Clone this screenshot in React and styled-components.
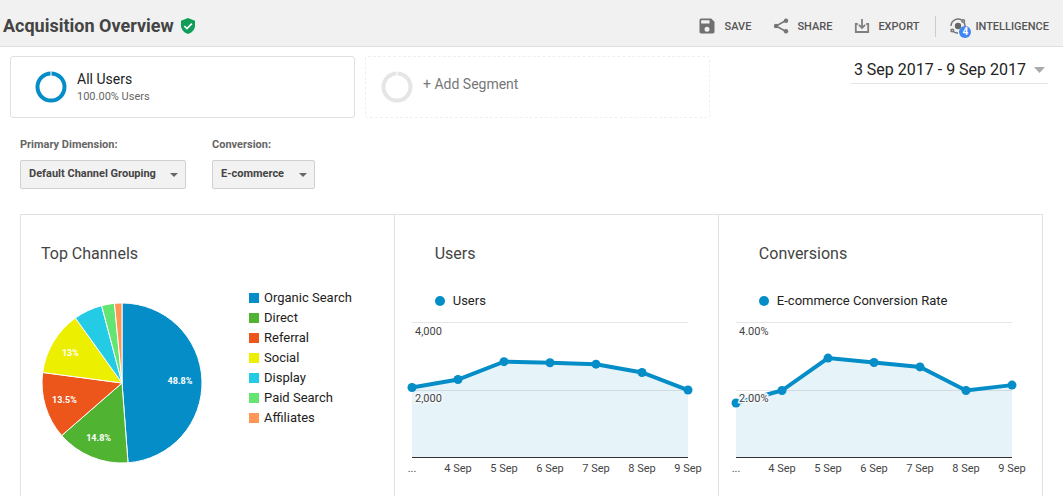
import React from 'react';
import styled, { createGlobalStyle, css } from 'styled-components';

const GlobalStyle = createGlobalStyle`
    * {
        box-sizing: border-box;
    }

    body {
        margin: 0;
        background-color: #fff;
        font-family: Roboto, "Liberation Sans", sans-serif;
        color: #222;
    }

    button, select {
        font-family: inherit;
    }
`;

const StyledPage = styled.div`
    display: flex;
    flex-direction: column;
    min-height: 100vh;
`;

const StyledHeader = styled.header`
    display: flex;
    align-items: center;
    justify-content: space-between;
    height: 47px;
    padding: 6px 14px 0 3px;
    background-color: #f1f1f1;
    border-bottom: 1px solid #dedede;
`;

const StyledTitle = styled.h1`
    display: flex;
    align-items: center;
    gap: 6px;
    margin: 0;
    font-size: 18px;
    line-height: 24px;
    font-weight: 700;
    color: #444;
`;

const StyledToolbar = styled.nav`
    display: flex;
    align-items: center;
    gap: 22px;
`;

const StyledToolbarButton = styled.button`
    display: flex;
    align-items: center;
    gap: 8px;
    padding: 0;
    border: 0;
    background: none;
    color: #555;
    font-size: 11px;
    line-height: 21px;
    font-weight: 500;
    cursor: pointer;

    ${props => props.$separated && css`
        margin-left: -6px;
        padding-left: 13px;
        border-left: 1px solid #ccc;
    `}
`;

const StyledIconWrapper = styled.span`
    position: relative;
    display: flex;
`;

const StyledBadge = styled.span`
    position: absolute;
    left: 10px;
    top: 9px;
    width: 12px;
    height: 12px;
    border-radius: 50%;
    background-color: #4285f4;
    color: #fff;
    font-size: 10px;
    line-height: 12px;
    font-weight: 700;
    text-align: center;
`;

const StyledSegments = styled.section`
    display: grid;
    grid-template-columns: 1fr 1fr 328px;
    gap: 10px;
    padding: 9px 15px 0 10px;
`;

const StyledSegment = styled.button`
    display: flex;
    align-items: center;
    gap: 10px;
    height: 62px;
    padding: 0 24px;
    border: 1px solid #e0e0e0;
    border-radius: 3px;
    background: none;
    text-align: left;
    cursor: pointer;

    ${props => props.$empty && css`
        padding: 0 15px;
        border: 1px dashed #efefef;
    `}
`;

const StyledSegmentName = styled.span`
    display: block;
    font-size: 14px;
    line-height: 18px;
    color: #222;

    ${props => props.$muted && css`
        padding-bottom: 6px;
        color: #777;
    `}
`;

const StyledSegmentShare = styled.span`
    display: block;
    font-size: 11px;
    line-height: 17px;
    color: #666;
`;

const StyledDateRange = styled.button`
    display: flex;
    align-items: center;
    gap: 8px;
    justify-self: end;
    align-self: start;
    height: 28px;
    padding: 0 3px;
    border: 0;
    border-bottom: 1px solid #e4e4e4;
    background: none;
    font-size: 16px;
    color: #222;
    cursor: pointer;
`;

const StyledFilters = styled.section`
    display: flex;
    gap: 26px;
    padding: 19px 20px 25px;
`;

const StyledFilter = styled.div`
    display: flex;
    flex-direction: column;
    align-items: flex-start;
    gap: 7px;
`;

const StyledFilterLabel = styled.label`
    font-size: 11px;
    line-height: 16px;
    font-weight: 700;
    color: #666;
`;

const StyledSelectWrapper = styled.div`
    position: relative;

    svg {
        position: absolute;
        right: 8px;
        top: 13px;
        pointer-events: none;
    }
`;

const StyledSelect = styled.select`
    appearance: none;
    height: 29px;
    padding: 0 29px 3px 8px;
    border: 1px solid #d0d0d0;
    border-radius: 2px;
    background-color: #f2f2f2;
    font-size: 11px;
    font-weight: 700;
    color: #444;
`;

const StyledPanels = styled.main`
    display: grid;
    grid-template-columns: 23fr 20fr 20fr;
    flex: 1;
    margin: 0 20px;
    border: 1px solid #e2e2e2;
    border-bottom: 0;
`;

const StyledPanel = styled.section`
    min-width: 0;

    & + & {
        border-left: 1px solid #e2e2e2;
    }
`;

const StyledPanelTitle = styled.h2`
    margin: 0;
    padding: 29px 20px 0;
    font-size: 16px;
    line-height: 20px;
    font-weight: 400;
    color: #444;

    ${props => props.$inset && css`
        padding-left: 40px;
    `}
`;

const StyledPieRow = styled.div`
    display: flex;
    align-items: flex-start;
    gap: 46px;
    padding: 24px 20px 0;

    svg {
        flex: none;
        margin-top: 14px;
    }
`;

const StyledLegend = styled.ul`
    margin: 0;
    padding: 0;
    list-style: none;
`;

const StyledLegendItem = styled.li`
    display: flex;
    align-items: center;
    gap: 5px;
    font-size: 13px;
    line-height: 20px;
    white-space: nowrap;

    &::before {
        content: '';
        width: 10px;
        height: 10px;
        background-color: ${props => props.$color};
    }
`;

const StyledSeriesName = styled.div`
    display: flex;
    align-items: center;
    gap: 8px;
    padding: 27px 20px 0 40px;
    font-size: 13px;
    line-height: 20px;

    &::before {
        content: '';
        width: 10px;
        height: 10px;
        border-radius: 50%;
        background-color: #058dc7;
    }
`;

const StyledLineChart = styled.svg`
    display: block;
    overflow: visible;
    font-size: 11px;
    fill: #444;
`;

const StyledAxisLabel = styled.text`
    paint-order: stroke;
    stroke: ${props => props.$halo};
    stroke-width: 3px;
`;

const CHANNELS = [
    { name: 'Organic Search', share: 48.8, color: '#058dc7' },
    { name: 'Direct', share: 14.8, color: '#50b432' },
    { name: 'Referral', share: 13.5, color: '#ed561b' },
    { name: 'Social', share: 13, color: '#edef00' },
    { name: 'Display', share: 5.8, color: '#24cbe5' },
    { name: 'Paid Search', share: 2.6, color: '#64e572' },
    { name: 'Affiliates', share: 1.5, color: '#ff9655' },
];

const DAYS = ['...', '4 Sep', '5 Sep', '6 Sep', '7 Sep', '8 Sep', '9 Sep'];
const USERS = [2059, 2296, 2824, 2791, 2750, 2504, 1985];
const CONVERSION_RATES = [1.6, 1.97, 2.93, 2.8, 2.67, 1.97, 2.13];

function SaveIcon() {
    return (
        <svg width="20" height="20" viewBox="0 0 24 24" fill="#707070">
            <path d="M17 3H5a2 2 0 0 0-2 2v14c0 1.100.9 2 2 2h14c1.100 0 2-.9 2-2V7l-4-4zm-5 16a3 3 0 1 1 0-6 3 3 0 0 1 0 6zm3-10H5V5h10v4z" />
        </svg>
    );
}

function ShareIcon() {
    return (
        <svg width="16" height="16" viewBox="0 0 16 16" fill="#757575">
            <path d="M13 2.500L3 8l10 5.500" fill="none" stroke="#757575" strokeWidth="1.500" />
            <circle cx="13" cy="2.700" r="2.200" />
            <circle cx="3" cy="8" r="2.200" />
            <circle cx="13" cy="13.300" r="2.200" />
        </svg>
    );
}

function ExportIcon() {
    return (
        <svg width="16" height="16" viewBox="0 0 16 16" fill="none" stroke="#808080" strokeWidth="1.800">
            <path d="M3.800 6H1.800v8h12.400V6h-2" />
            <path d="M8 1v8.500M4.800 6.800L8 10l3.200-3.200" />
        </svg>
    );
}

function IntelligenceIcon() {
    return (
        <svg width="18" height="18" viewBox="0 0 18 18" fill="none" stroke="#757575" strokeWidth="1.500">
            <circle cx="9" cy="9" r="3.200" fill="#666" stroke="none" />
            <path d="M2 9a7 7 0 0 1 11-5.700M4 14.300A7 7 0 0 0 9 16M16 9a7 7 0 0 0-1-3.500" />
            <circle cx="14.200" cy="4" r="1.300" />
            <circle cx="3.300" cy="13.500" r="1.300" />
        </svg>
    );
}

function ShieldIcon() {
    return (
        <svg width="16" height="18" viewBox="0 0 16 18">
            <path d="M8 1l7 2.700v5.100c0 3.600-2.900 6.900-7 8.200-4.100-1.300-7-4.600-7-8.200V3.700z" fill="#0f9d58" />
            <path d="M4.300 9l2.600 2.600 5-5" fill="none" stroke="#fff" strokeWidth="1.700" />
        </svg>
    );
}

function Ring({ color }) {
    return (
        <svg width="32" height="32" viewBox="0 0 32 32">
            <circle cx="16" cy="16" r="13.500" fill="none" stroke={color} strokeWidth="4" />
            <path d="M16 0v5" stroke="#fff" strokeWidth="1" />
        </svg>
    );
}

function Caret({ width, height, color }) {
    return (
        <svg width={width} height={height} viewBox="0 0 10 5" preserveAspectRatio="none">
            <path d="M0 0h10L5 5z" fill={color} />
        </svg>
    );
}

function Filter({ id, label, options }) {
    return (
        <StyledFilter>
            <StyledFilterLabel htmlFor={id}>{label}</StyledFilterLabel>
            <StyledSelectWrapper>
                <StyledSelect id={id}>
                    {options.map(option => <option key={option}>{option}</option>)}
                </StyledSelect>
                <Caret width={8} height={4} color="#666" />
            </StyledSelectWrapper>
        </StyledFilter>
    );
}

function PieChart({ items }) {
    const radius = 80;
    const point = (share, distance) => {
        const angle = share / 100 * Math.PI * 2;
        return [81 + Math.sin(angle) * distance, 81 - Math.cos(angle) * distance];
    };
    let start = 0;

    return (
        <svg width="162" height="162" fontSize="9" fontWeight="700" textAnchor="middle">
            {items.map(({ name, share, color }) => {
                const from = point(start, radius);
                const to = point(start + share, radius);
                const label = point(start + share / 2, 59);
                start += share;

                return (
                    <g key={name}>
                        <path
                            d={`M81 81L${from.join(' ')}A${radius} ${radius} 0 0 1 ${to.join(' ')}Z`}
                            fill={color}
                            stroke="#fff"
                        />
                        {share > 10 && (
                            <text x={label[0] - 1} y={label[1] + 3} fill="#fff">{share}%</text>
                        )}
                    </g>
                );
            })}
        </svg>
    );
}

function LineChart({ values, max, labels }) {
    const left = 17;
    const step = 46;
    const bottom = 146;
    const height = 135;
    const right = left + step * (values.length - 1);
    const points = values.map((value, i) => [left + i * step, bottom - value / max * height]);
    const line = points.map(p => p.join(',')).join(' ');

    return (
        <StyledLineChart width="310" height="170">
            <path d={`M${left} 11.500H${right}M${left} 79.500H${right}`} stroke="#e6e6e6" />
            <polygon points={`${left},${bottom} ${line} ${right},${bottom}`} fill="#058dc7" fillOpacity="0.1" />
            <path d={`M${left} 146.500H${right}`} stroke="#333" />
            <polyline points={line} fill="none" stroke="#058dc7" strokeWidth="4" />
            {points.map(([x, y]) => <circle key={x} cx={x} cy={y} r="4.500" fill="#058dc7" />)}
            <StyledAxisLabel x="20" y="24" $halo="#fff">{labels[0]}</StyledAxisLabel>
            <StyledAxisLabel x="20" y="91" $halo="#f3f9fc">{labels[1]}</StyledAxisLabel>
            {DAYS.map((day, i) => (
                <text key={day} x={left + i * step} y="161" textAnchor="middle">{day}</text>
            ))}
        </StyledLineChart>
    );
}

export default function App() {
    return (
        <StyledPage>
            <GlobalStyle />
            <StyledHeader>
                <StyledTitle>
                    Acquisition Overview
                    <ShieldIcon />
                </StyledTitle>
                <StyledToolbar>
                    <StyledToolbarButton><SaveIcon />SAVE</StyledToolbarButton>
                    <StyledToolbarButton><ShareIcon />SHARE</StyledToolbarButton>
                    <StyledToolbarButton><ExportIcon />EXPORT</StyledToolbarButton>
                    <StyledToolbarButton $separated>
                        <StyledIconWrapper>
                            <IntelligenceIcon />
                            <StyledBadge>4</StyledBadge>
                        </StyledIconWrapper>
                        INTELLIGENCE
                    </StyledToolbarButton>
                </StyledToolbar>
            </StyledHeader>

            <StyledSegments>
                <StyledSegment>
                    <Ring color="#058dc7" />
                    <span>
                        <StyledSegmentName>All Users</StyledSegmentName>
                        <StyledSegmentShare>100.00% Users</StyledSegmentShare>
                    </span>
                </StyledSegment>
                <StyledSegment $empty>
                    <Ring color="#e5e5e5" />
                    <StyledSegmentName $muted>+ Add Segment</StyledSegmentName>
                </StyledSegment>
                <StyledDateRange>
                    3 Sep 2017 - 9 Sep 2017
                    <Caret width={11} height={6} color="#aaa" />
                </StyledDateRange>
            </StyledSegments>

            <StyledFilters>
                <Filter id="dimension" label="Primary Dimension:" options={['Default Channel Grouping']} />
                <Filter id="conversion" label="Conversion:" options={['E-commerce']} />
            </StyledFilters>

            <StyledPanels>
                <StyledPanel>
                    <StyledPanelTitle>Top Channels</StyledPanelTitle>
                    <StyledPieRow>
                        <PieChart items={CHANNELS} />
                        <StyledLegend>
                            {CHANNELS.map(({ name, color }) => (
                                <StyledLegendItem key={name} $color={color}>{name}</StyledLegendItem>
                            ))}
                        </StyledLegend>
                    </StyledPieRow>
                </StyledPanel>
                <StyledPanel>
                    <StyledPanelTitle $inset>Users</StyledPanelTitle>
                    <StyledSeriesName>Users</StyledSeriesName>
                    <LineChart values={USERS} max={4000} labels={['4,000', '2,000']} />
                </StyledPanel>
                <StyledPanel>
                    <StyledPanelTitle $inset>Conversions</StyledPanelTitle>
                    <StyledSeriesName>E-commerce Conversion Rate</StyledSeriesName>
                    <LineChart values={CONVERSION_RATES} max={4} labels={['4.00%', '2.00%']} />
                </StyledPanel>
            </StyledPanels>
        </StyledPage>
    );
}
